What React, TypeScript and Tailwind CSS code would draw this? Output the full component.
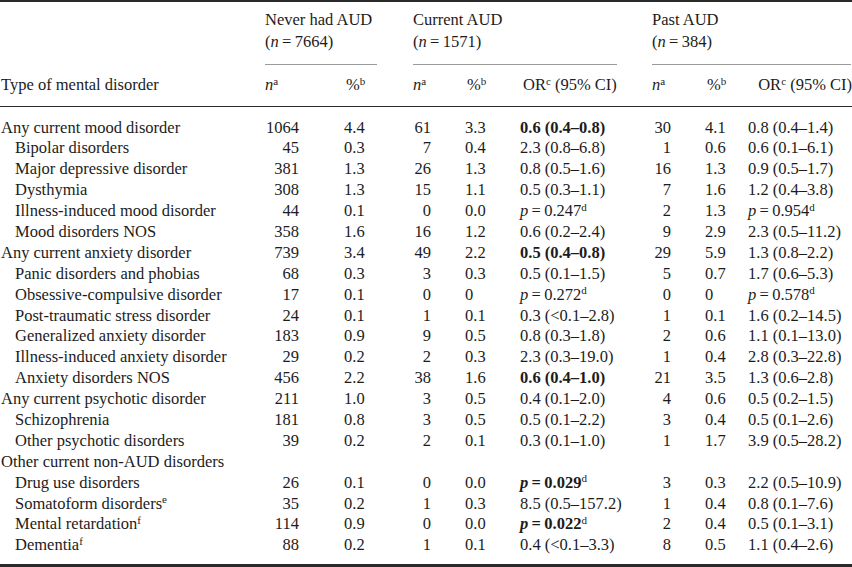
import type { ReactNode } from 'react';

type Row = {
  label: ReactNode;
  sub?: boolean;
  vals?: [string, string, string, string, ReactNode, string, string, ReactNode];
};

const cols = 'grid grid-cols-[265px_79px_69px_52px_55px_132px_53px_43px_104px]';

function Sup({ children }: { children: ReactNode }) {
  return <sup className="text-[11px] font-normal">{children}</sup>;
}

function P({ v, bold }: { v: string; bold?: boolean }) {
  return (
    <span>
      <span className={bold ? 'font-bold' : ''}>
        <i>p</i>
        {'\u2009=\u2009'}
        {v}
      </span>
      <Sup>d</Sup>
    </span>
  );
}

const B = ({ children }: { children: ReactNode }) => <span className="font-bold">{children}</span>;

const rows: Row[] = [
  { label: 'Any current mood disorder', vals: ['1064', '4.4', '61', '3.3', <B>0.6 (0.4–0.8)</B>, '30', '4.1', '0.8 (0.4–1.4)'] },
  { label: 'Bipolar disorders', sub: true, vals: ['45', '0.3', '7', '0.4', '2.3 (0.8–6.8)', '1', '0.6', '0.6 (0.1–6.1)'] },
  { label: 'Major depressive disorder', sub: true, vals: ['381', '1.3', '26', '1.3', '0.8 (0.5–1.6)', '16', '1.3', '0.9 (0.5–1.7)'] },
  { label: 'Dysthymia', sub: true, vals: ['308', '1.3', '15', '1.1', '0.5 (0.3–1.1)', '7', '1.6', '1.2 (0.4–3.8)'] },
  { label: 'Illness-induced mood disorder', sub: true, vals: ['44', '0.1', '0', '0.0', <P v="0.247" />, '2', '1.3', <P v="0.954" />] },
  { label: 'Mood disorders NOS', sub: true, vals: ['358', '1.6', '16', '1.2', '0.6 (0.2–2.4)', '9', '2.9', '2.3 (0.5–11.2)'] },
  { label: 'Any current anxiety disorder', vals: ['739', '3.4', '49', '2.2', <B>0.5 (0.4–0.8)</B>, '29', '5.9', '1.3 (0.8–2.2)'] },
  { label: 'Panic disorders and phobias', sub: true, vals: ['68', '0.3', '3', '0.3', '0.5 (0.1–1.5)', '5', '0.7', '1.7 (0.6–5.3)'] },
  { label: 'Obsessive-compulsive disorder', sub: true, vals: ['17', '0.1', '0', '0', <P v="0.272" />, '0', '0', <P v="0.578" />] },
  { label: 'Post-traumatic stress disorder', sub: true, vals: ['24', '0.1', '1', '0.1', '0.3 (<0.1–2.8)', '1', '0.1', '1.6 (0.2–14.5)'] },
  { label: 'Generalized anxiety disorder', sub: true, vals: ['183', '0.9', '9', '0.5', '0.8 (0.3–1.8)', '2', '0.6', '1.1 (0.1–13.0)'] },
  { label: 'Illness-induced anxiety disorder', sub: true, vals: ['29', '0.2', '2', '0.3', '2.3 (0.3–19.0)', '1', '0.4', '2.8 (0.3–22.8)'] },
  { label: 'Anxiety disorders NOS', sub: true, vals: ['456', '2.2', '38', '1.6', <B>0.6 (0.4–1.0)</B>, '21', '3.5', '1.3 (0.6–2.8)'] },
  { label: 'Any current psychotic disorder', vals: ['211', '1.0', '3', '0.5', '0.4 (0.1–2.0)', '4', '0.6', '0.5 (0.2–1.5)'] },
  { label: 'Schizophrenia', sub: true, vals: ['181', '0.8', '3', '0.5', '0.5 (0.1–2.2)', '3', '0.4', '0.5 (0.1–2.6)'] },
  { label: 'Other psychotic disorders', sub: true, vals: ['39', '0.2', '2', '0.1', '0.3 (0.1–1.0)', '1', '1.7', '3.9 (0.5–28.2)'] },
  { label: 'Other current non-AUD disorders' },
  { label: 'Drug use disorders', sub: true, vals: ['26', '0.1', '0', '0.0', <P v="0.029" bold />, '3', '0.3', '2.2 (0.5–10.9)'] },
  { label: <>Somatoform disorders<Sup>e</Sup></>, sub: true, vals: ['35', '0.2', '1', '0.3', '8.5 (0.5–157.2)', '1', '0.4', '0.8 (0.1–7.6)'] },
  { label: <>Mental retardation<Sup>f</Sup></>, sub: true, vals: ['114', '0.9', '0', '0.0', <P v="0.022" bold />, '2', '0.4', '0.5 (0.1–3.1)'] },
  { label: <>Dementia<Sup>f</Sup></>, sub: true, vals: ['88', '0.2', '1', '0.1', '0.4 (<0.1–3.3)', '8', '0.5', '1.1 (0.4–2.6)'] },
];

function Group({ title, n, line, span }: { title: string; n: string; line: string; span: string }) {
  return (
    <div className={span}>
      <div className="leading-[22px]">{title}</div>
      <div className="leading-[22px]">
        (<i>n</i>
        {'\u2009=\u2009'}
        {n})
      </div>
      <div className={`mt-[11px] h-px bg-[#9b9b9b] ${line}`} />
    </div>
  );
}

function NHead() {
  return (
    <div>
      <i>n</i>
      <Sup>a</Sup>
    </div>
  );
}

function PctHead() {
  return (
    <div className="pl-[2px]">
      %<Sup>b</Sup>
    </div>
  );
}

export default function App() {
  return (
    <div className="w-[852px] h-[567px] overflow-hidden bg-white text-[#1c1c1c] text-[16.5px] font-['Liberation_Serif',serif]">
      <div className="h-[2px] bg-[#2a2a2a]" />
      <div className={`${cols} pt-[7px]`}>
        <div />
        <Group title="Never had AUD" n="7664" line="w-[112px]" span="col-span-2" />
        <Group title="Current AUD" n="1571" line="w-[204px]" span="col-span-3" />
        <Group title="Past AUD" n="384" line="w-[199px]" span="col-span-3" />
      </div>
      <div className={`${cols} pt-[9px] leading-[22px]`}>
        <div className="pl-[1px]">Type of mental disorder</div>
        <NHead />
        <PctHead />
        <NHead />
        <PctHead />
        <div className="pl-[3px]">
          OR<Sup>c</Sup> (95% CI)
        </div>
        <NHead />
        <PctHead />
        <div className="text-right whitespace-nowrap">
          OR<Sup>c</Sup> (95% CI)
        </div>
      </div>
      <div className="mt-[10px] h-px bg-[#2a2a2a]" />
      <div className="pt-[10.5px]">
        {rows.map((r, i) => (
          <div key={i} className={`${cols} h-[20.9px] items-center leading-[20.9px] whitespace-nowrap`}>
            <div className={r.sub ? 'pl-[15px]' : 'pl-[1px]'}>{r.label}</div>
            {r.vals && (
              <>
                <div className="w-[34px] text-right">{r.vals[0]}</div>
                <div>{r.vals[1]}</div>
                <div className="w-[18px] text-right">{r.vals[2]}</div>
                <div>{r.vals[3]}</div>
                <div>{r.vals[4]}</div>
                <div className="w-[19px] text-right">{r.vals[5]}</div>
                <div>{r.vals[6]}</div>
                <div>{r.vals[7]}</div>
              </>
            )}
          </div>
        ))}
      </div>
      <div className="mt-[8px] h-[3px] bg-[#2a2a2a]" />
    </div>
  );
}
